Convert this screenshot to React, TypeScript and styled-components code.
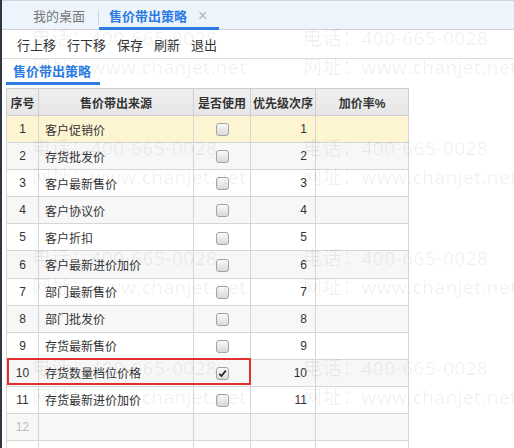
import React from "react";
import styled, { createGlobalStyle } from "styled-components";

const GlobalStyle = createGlobalStyle`
  html, body {
    margin: 0;
    padding: 0;
    background: #fff;
    overflow: hidden;
  }
  body {
    font-family: "Liberation Sans", "Noto Sans CJK SC", sans-serif;
    font-size: 13px;
    color: #333;
  }
`;

const BLUE = "#2b7be3";
const HEAD_H = 26;
const ROW_H = 27.1;

const Page = styled.div`
  position: relative;
  height: 448px;
  border-left: 2px solid #2e3845;
  display: flex;
  flex-direction: column;
  overflow: hidden;

  & > * {
    flex-shrink: 0;
  }
`;

const TabBar = styled.div`
  height: 30px;
  box-sizing: border-box;
  border-top: 1px solid #cfd6e0;
  border-bottom: 1px solid #cdd2d8;
  background: #eef4fc;
  display: flex;
  align-items: stretch;
  padding-left: 31px;
`;

const Tab = styled.div<{ $active?: boolean }>`
  display: flex;
  align-items: center;
  gap: 11px;
  padding: ${(p) => (p.$active ? "3px 12px 0 10px" : "3px 13px 0 0")};
  color: ${(p) => (p.$active ? BLUE : "#777")};
  font-weight: ${(p) => (p.$active ? 700 : 400)};
  border-bottom: 3px solid ${(p) => (p.$active ? BLUE : "transparent")};
  margin-bottom: -1px;
  box-sizing: border-box;
`;

const TabDivider = styled.div`
  width: 1px;
  margin: 9px 0 4px;
  background: #d0d6de;
`;

const Close = styled.span`
  color: #b5b5b5;
  font-size: 16px;
  font-weight: 400;
  line-height: 1;
`;

const Toolbar = styled.div`
  height: 29px;
  box-sizing: border-box;
  border-bottom: 1px solid #dcdcdc;
  display: flex;
  align-items: center;
  gap: 11px;
  padding-left: 15px;
`;

const ToolButton = styled.span`
  color: #333;
  cursor: pointer;
`;

const SectionHead = styled.div`
  height: 29px;
  padding-left: 4px;
  display: flex;
  align-items: flex-start;
`;

const SectionTitle = styled.div`
  margin-top: 3px;
  padding: 0 9px 0 7px;
  height: 20px;
  line-height: 19px;
  color: ${BLUE};
  font-weight: 700;
  border-bottom: 3px solid ${BLUE};
`;

const GridWrap = styled.div`
  position: relative;
  margin-left: 4px;
  width: 397px;
`;

const Grid = styled.table`
  border-collapse: collapse;
  table-layout: fixed;
  width: 397px;
  font-size: 12px;
`;

const HeadCell = styled.th<{ $w: number }>`
  width: ${(p) => p.$w}px;
  height: ${HEAD_H}px;
  padding: 0;
  background: linear-gradient(#f0f0f0, #e6e6e6);
  border: 1px solid #cfcfcf;
  font-weight: 700;
  color: #333;
  text-align: center;
  white-space: nowrap;
`;

const Row = styled.tr<{ $tone: "sel" | "odd" | "even" }>`
  height: ${ROW_H}px;
  background: ${(p) =>
    p.$tone === "sel" ? "#fdf5d2" : p.$tone === "even" ? "#f7f7f7" : "#fff"};
`;

const Cell = styled.td<{ $align?: "left" | "center" | "right"; $muted?: boolean }>`
  padding: 0 ${(p) => (p.$align === "right" ? "8px" : "6px")};
  border: 1px solid #d6d6d6;
  text-align: ${(p) => p.$align ?? "left"};
  color: ${(p) => (p.$muted ? "#bbb" : "#333")};
  white-space: nowrap;
  overflow: hidden;
`;

const Check = styled.span`
  display: inline-block;
  vertical-align: middle;
  width: 11px;
  height: 11px;
  border: 1px solid #a3a3a3;
  border-radius: 3px;
  background: linear-gradient(#fafafa, #d9d9d9);
  position: relative;
  svg {
    position: absolute;
    left: 1px;
    top: 1px;
  }
`;

const Highlight = styled.div<{ $top: number }>`
  position: absolute;
  left: 1px;
  top: ${(p) => p.$top}px;
  width: 244px;
  height: 27px;
  border: 2px solid #e0312f;
  box-sizing: border-box;
  pointer-events: none;
`;

const Watermark = styled.div`
  position: absolute;
  left: 30px;
  top: 24px;
  display: grid;
  grid-template-columns: repeat(2, 271px);
  grid-auto-rows: 110px;
  pointer-events: none;
  font-family: "Open Sans", "Noto Sans CJK SC", sans-serif;
  font-size: 19px;
  letter-spacing: 0.5px;
  line-height: 29px;
  color: rgba(0, 0, 0, 0.065);
  white-space: nowrap;
`;

const columns = [
  { title: "序号", w: 31 },
  { title: "售价带出来源", w: 154 },
  { title: "是否使用", w: 56 },
  { title: "优先级次序", w: 64 },
  { title: "加价率%", w: 92 },
];

const sources = [
  { name: "客户促销价", on: false },
  { name: "存货批发价", on: false },
  { name: "客户最新售价", on: false },
  { name: "客户协议价", on: false },
  { name: "客户折扣", on: false },
  { name: "客户最新进价加价", on: false },
  { name: "部门最新售价", on: false },
  { name: "部门批发价", on: false },
  { name: "存货最新售价", on: false },
  { name: "存货数量档位价格", on: true },
  { name: "存货最新进价加价", on: false },
];

function Checkbox({ on }: { on?: boolean }) {
  return (
    <Check>
      {on && (
        <svg width="9" height="9" viewBox="0 0 9 9">
          <path d="M1.3 4.8 L3.4 7 L7.8 1.6" fill="none" stroke="#222" strokeWidth="1.7" />
        </svg>
      )}
    </Check>
  );
}

export default function App() {
  const blanks = [12, 13];
  return (
    <>
      <GlobalStyle />
      <Page>
        <TabBar>
          <Tab>我的桌面</Tab>
          <TabDivider />
          <Tab $active>
            售价带出策略
            <Close>×</Close>
          </Tab>
        </TabBar>

        <Toolbar>
          {["行上移", "行下移", "保存", "刷新", "退出"].map((t) => (
            <ToolButton key={t}>{t}</ToolButton>
          ))}
        </Toolbar>

        <SectionHead>
          <SectionTitle>售价带出策略</SectionTitle>
        </SectionHead>

        <GridWrap>
          <Grid>
            <thead>
              <tr>
                {columns.map((c) => (
                  <HeadCell key={c.title} $w={c.w}>
                    {c.title}
                  </HeadCell>
                ))}
              </tr>
            </thead>
            <tbody>
              {sources.map((s, i) => (
                <Row key={s.name} $tone={i === 0 ? "sel" : i % 2 ? "even" : "odd"}>
                  <Cell $align="center">{i + 1}</Cell>
                  <Cell>{s.name}</Cell>
                  <Cell $align="center">
                    <Checkbox on={s.on} />
                  </Cell>
                  <Cell $align="right">{i + 1}</Cell>
                  <Cell />
                </Row>
              ))}
              {blanks.map((n) => (
                <Row key={n} $tone={n % 2 ? "odd" : "even"}>
                  <Cell $align="center" $muted>
                    {n}
                  </Cell>
                  <Cell />
                  <Cell />
                  <Cell />
                  <Cell />
                </Row>
              ))}
            </tbody>
          </Grid>
          <Highlight $top={HEAD_H + 1 + 9 * ROW_H - 1} />
        </GridWrap>

        <Watermark>
          {Array.from({ length: 8 }).map((_, i) => (
            <div key={i}>
              <div>电话：400-665-0028</div>
              <div>网址：www.chanjet.net</div>
            </div>
          ))}
        </Watermark>
      </Page>
    </>
  );
}
